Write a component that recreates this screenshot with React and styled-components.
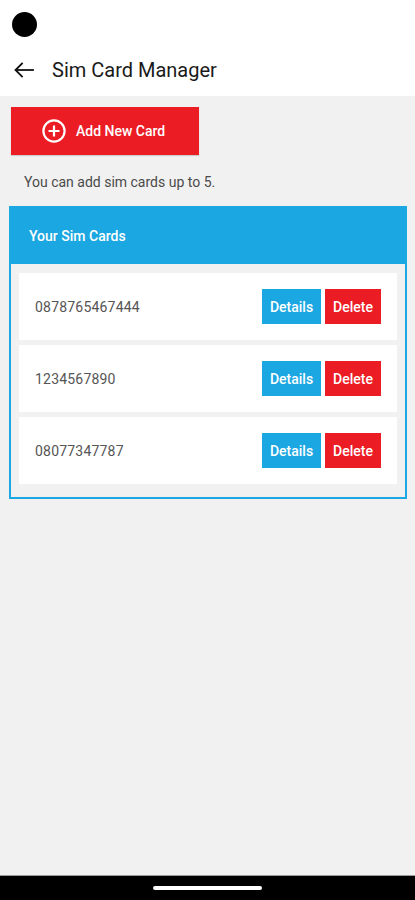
import React from 'react';
import styled, { createGlobalStyle } from 'styled-components';

const GlobalStyle = createGlobalStyle`
  html, body {
    margin: 0;
    padding: 0;
    background: #f1f1f1;
    font-family: Roboto, "Liberation Sans", sans-serif;
  }
`;

const RED = '#ec1c24';
const BLUE = '#1ba7e1';

const Screen = styled.div`
  display: flex;
  flex-direction: column;
  height: 900px;
  background: #f1f1f1;
`;

const StatusBar = styled.div`
  height: 44px;
  background: #fff;
  padding: 12px 0 0 12px;
  box-sizing: border-box;
`;

const CameraDot = styled.div`
  width: 25px;
  height: 25px;
  border-radius: 50%;
  background: #000;
`;

const Toolbar = styled.div`
  height: 52px;
  background: #fff;
  display: flex;
  align-items: center;
  padding-left: 12px;
  gap: 16px;
`;

const Title = styled.h1`
  margin: 0;
  font-size: 20px;
  font-weight: 400;
  color: #1a1a1a;
`;

const Content = styled.div`
  flex: 1;
  display: flex;
  flex-direction: column;
  padding: 11px 8px 0 9px;
`;

const AddButton = styled.button`
  margin-left: 2px;
  width: 188px;
  height: 48px;
  border: none;
  background: ${RED};
  color: #fff;
  display: flex;
  align-items: center;
  padding: 0 0 0 31px;
  gap: 10px;
  font-family: inherit;
  font-size: 14px;
  font-weight: 500;
  box-shadow: 0 1px 1px rgba(0, 0, 0, 0.15);
`;

const Hint = styled.p`
  margin: 19px 0 0 15px;
  font-size: 14px;
  line-height: 16px;
  color: #4a4a4a;
`;

const Panel = styled.section`
  margin-top: 16px;
  border: 2px solid ${BLUE};
  display: flex;
  flex-direction: column;
`;

const PanelHeader = styled.div`
  height: 56px;
  background: ${BLUE};
  color: #fff;
  display: flex;
  align-items: center;
  padding-left: 18px;
  font-size: 14px;
  font-weight: 500;
`;

const PanelBody = styled.div`
  display: flex;
  flex-direction: column;
  gap: 5px;
  padding: 9px 8px 13px;
`;

const Row = styled.div`
  height: 67px;
  background: #fff;
  display: flex;
  align-items: center;
  padding: 0 16px;
`;

const Number = styled.span`
  flex: 1;
  font-size: 14px;
  color: #555;
  letter-spacing: 0.2px;
`;

const Actions = styled.div`
  display: flex;
  gap: 4px;
`;

const ActionButton = styled.button`
  height: 35px;
  width: ${(props) => props.$width}px;
  border: none;
  padding: 0;
  background: ${(props) => props.$color};
  color: #fff;
  font-family: inherit;
  font-size: 14px;
  font-weight: 500;
`;

const NavBar = styled.div`
  height: 24px;
  background: #000;
  border-top: 1px solid #9a9a9a;
  display: flex;
  justify-content: center;
  align-items: center;
`;

const Handle = styled.div`
  width: 109px;
  height: 4px;
  border-radius: 2px;
  background: #fff;
`;

const BackArrow = () => (
  <svg width="24" height="24" viewBox="0 0 24 24" fill="none" stroke="#111" strokeWidth="1.8" strokeLinecap="square">
    <path d="M21 12H4" />
    <path d="M10 5.5l-6.5 6.5 6.5 6.5" />
  </svg>
);

const PlusCircle = () => (
  <svg width="24" height="24" viewBox="0 0 24 24" fill="none" stroke="#fff" strokeWidth="2.2">
    <circle cx="12" cy="12" r="10.6" />
    <path d="M12 6.5v11M6.5 12h11" />
  </svg>
);

const cards = ['0878765467444', '1234567890', '08077347787'];

export default function App() {
  return (
    <>
      <GlobalStyle />
      <Screen>
        <StatusBar>
          <CameraDot />
        </StatusBar>
        <Toolbar>
          <BackArrow />
          <Title>Sim Card Manager</Title>
        </Toolbar>
        <Content>
          <AddButton>
            <PlusCircle />
            Add New Card
          </AddButton>
          <Hint>You can add sim cards up to 5.</Hint>
          <Panel>
            <PanelHeader>Your Sim Cards</PanelHeader>
            <PanelBody>
              {cards.map((num) => (
                <Row key={num}>
                  <Number>{num}</Number>
                  <Actions>
                    <ActionButton $color={BLUE} $width={59}>Details</ActionButton>
                    <ActionButton $color={RED} $width={56}>Delete</ActionButton>
                  </Actions>
                </Row>
              ))}
            </PanelBody>
          </Panel>
        </Content>
        <NavBar>
          <Handle />
        </NavBar>
      </Screen>
    </>
  );
}
